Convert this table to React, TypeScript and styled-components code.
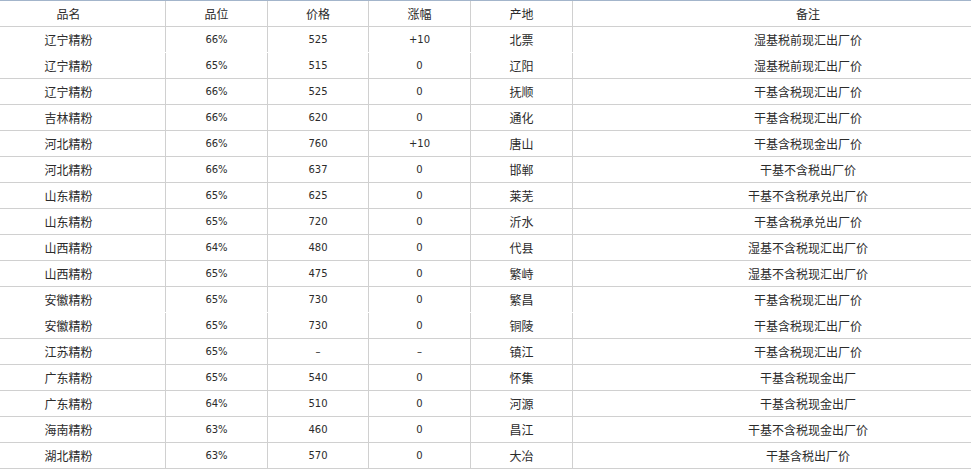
import React from 'react';
import styled, { createGlobalStyle } from 'styled-components';

type Item = {
  name: string;
  grade: string;
  price: string;
  change: string;
  origin: string;
  note: string;
  joined?: boolean;
};

const items: Item[] = [
  { name: '辽宁精粉', grade: '66%', price: '525', change: '+10', origin: '北票', note: '湿基税前现汇出厂价', joined: true },
  { name: '辽宁精粉', grade: '65%', price: '515', change: '0', origin: '辽阳', note: '湿基税前现汇出厂价' },
  { name: '辽宁精粉', grade: '66%', price: '525', change: '0', origin: '抚顺', note: '干基含税现汇出厂价' },
  { name: '吉林精粉', grade: '66%', price: '620', change: '0', origin: '通化', note: '干基含税现汇出厂价' },
  { name: '河北精粉', grade: '66%', price: '760', change: '+10', origin: '唐山', note: '干基含税现金出厂价' },
  { name: '河北精粉', grade: '66%', price: '637', change: '0', origin: '邯郸', note: '干基不含税出厂价' },
  { name: '山东精粉', grade: '65%', price: '625', change: '0', origin: '莱芜', note: '干基不含税承兑出厂价' },
  { name: '山东精粉', grade: '65%', price: '720', change: '0', origin: '沂水', note: '干基含税承兑出厂价' },
  { name: '山西精粉', grade: '64%', price: '480', change: '0', origin: '代县', note: '湿基不含税现汇出厂价' },
  { name: '山西精粉', grade: '65%', price: '475', change: '0', origin: '繁峙', note: '湿基不含税现汇出厂价' },
  { name: '安徽精粉', grade: '65%', price: '730', change: '0', origin: '繁昌', note: '干基含税现汇出厂价', joined: true },
  { name: '安徽精粉', grade: '65%', price: '730', change: '0', origin: '铜陵', note: '干基含税现汇出厂价' },
  { name: '江苏精粉', grade: '65%', price: '–', change: '–', origin: '镇江', note: '干基含税现汇出厂价' },
  { name: '广东精粉', grade: '65%', price: '540', change: '0', origin: '怀集', note: '干基含税现金出厂' },
  { name: '广东精粉', grade: '64%', price: '510', change: '0', origin: '河源', note: '干基含税现金出厂' },
  { name: '海南精粉', grade: '63%', price: '460', change: '0', origin: '昌江', note: '干基不含税现金出厂价' },
  { name: '湖北精粉', grade: '63%', price: '570', change: '0', origin: '大冶', note: '干基含税出厂价' },
];

export default function App() {
  return (
    <>
      <GlobalStyle />
      <Viewport>
        <PriceTable>
          <HeaderRow>
            <Cell>品名</Cell>
            <Cell>品位</Cell>
            <Cell>价格</Cell>
            <Cell>涨幅</Cell>
            <Cell>产地</Cell>
            <Cell>备注</Cell>
          </HeaderRow>
          {items.map((item, i) => (
            <Row key={i} $joined={item.joined}>
              <Cell>{item.name}</Cell>
              <NumCell>{item.grade}</NumCell>
              <NumCell>{item.price}</NumCell>
              <NumCell>{item.change}</NumCell>
              <Cell>{item.origin}</Cell>
              <Cell>{item.note}</Cell>
            </Row>
          ))}
        </PriceTable>
      </Viewport>
    </>
  );
}

const GlobalStyle = createGlobalStyle`
  html, body {
    margin: 0;
    padding: 0;
    background: #fff;
  }
  body {
    font-family: "Liberation Sans", "Noto Sans CJK SC", sans-serif;
    font-size: 12px;
    color: #2b2b2b;
  }
`;

const Viewport = styled.div`
  width: 971px;
  height: 470px;
  overflow: hidden;
`;

// 表格比截图更宽，左右两侧被裁掉
const PriceTable = styled.div`
  width: 1071px;
  margin-left: -28px;
  border-top: 1px solid #a3b5cb;
`;

const Row = styled.div<{ $joined?: boolean }>`
  display: grid;
  grid-template-columns: 193px 102px 101px 102px 102px 471px;
  height: 25px;
  border-bottom: 1px solid ${(p) => (p.$joined ? 'transparent' : '#d0d0d0')};
`;

const HeaderRow = styled(Row)`
  height: 25px;
`;

const Cell = styled.div`
  display: flex;
  align-items: center;
  justify-content: center;
  white-space: nowrap;
  & + & {
    border-left: 1px solid #d0d0d0;
  }
`;

const NumCell = styled(Cell)`
  font-family: "DejaVu Sans", sans-serif;
  font-size: 10px;
`;
